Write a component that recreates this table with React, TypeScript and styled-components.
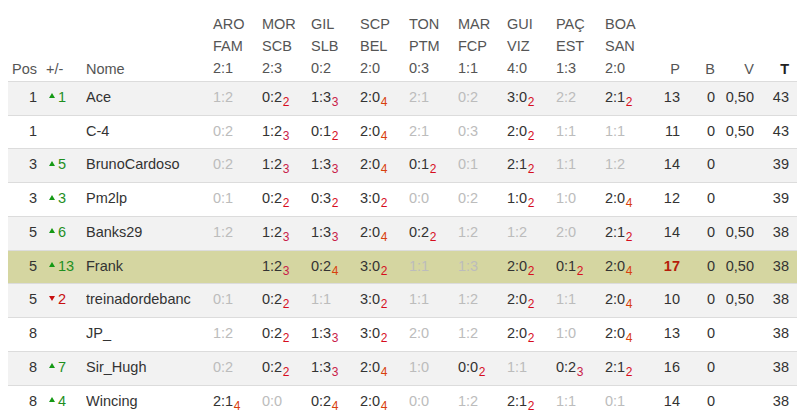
import React from "react";
import styled, { createGlobalStyle } from "styled-components";

const GlobalStyle = createGlobalStyle`
  html, body { margin: 0; padding: 0; background: #fff; }
  body { font-family: "Liberation Sans", Arial, sans-serif; }
  #root { padding: 0 0 0 8px; }
`;

type Align = "left" | "right";

const Table = styled.table`
  border-collapse: collapse;
  table-layout: fixed;
  width: 789px;
  font-size: 14.5px;
  line-height: 1.5;
  color: #333;
`;

const Col = styled.col<{ $w: number }>`
  width: ${(p) => p.$w}px;
`;

const HeadCell = styled.th<{ $align?: Align; $pr?: number; $pb?: number; $bold?: boolean }>`
  font-weight: ${(p) => (p.$bold ? 700 : 400)};
  color: ${(p) => (p.$bold ? "#222" : "#555")};
  text-align: ${(p) => p.$align || "left"};
  vertical-align: bottom;
  padding: 14px ${(p) => p.$pr || 0}px ${(p) => p.$pb || 0}px 0;
  white-space: nowrap;
`;

const Row = styled.tr<{ $bg: "odd" | "even" | "hi" }>`
  background: ${(p) => (p.$bg === "hi" ? "#d5d6a1" : p.$bg === "odd" ? "#f2f2f2" : "#fff")};
`;

const Cell = styled.td<{ $align?: Align; $pr?: number; $pl?: number }>`
  border-top: 1px solid #dcdcdc;
  padding: 5px ${(p) => p.$pr || 0}px 6px ${(p) => p.$pl || 0}px;
  height: 21.75px;
  text-align: ${(p) => p.$align || "left"};
  white-space: nowrap;
  overflow: hidden;
`;

const Delta = styled.span<{ $up: boolean }>`
  color: ${(p) => (p.$up ? "#1f8f1f" : "#c81010")};
`;

const Triangle = styled.span<{ $up: boolean }>`
  display: inline-block;
  width: 0;
  height: 0;
  margin-right: 3px;
  border-left: 3px solid transparent;
  border-right: 3px solid transparent;
  ${(p) =>
    p.$up
      ? "border-bottom: 5px solid #159915; vertical-align: 3.5px;"
      : "border-top: 5px solid #c81010; vertical-align: 3.5px;"}
`;

const Score = styled.span<{ $faded: boolean }>`
  color: ${(p) => (p.$faded ? "#bcbcbc" : "#333")};
`;

const subColors: Record<number, string> = {
  2: "#d60d1e",
  3: "#c81c48",
  4: "#d8400c",
};

const Sub = styled.span<{ $n: number }>`
  font-size: 12px;
  line-height: 0;
  vertical-align: -4px;
  margin-left: 0.5px;
  color: ${(p) => subColors[p.$n] || "#d00"};
`;

const Points = styled.span<{ $hot?: boolean }>`
  font-weight: ${(p) => (p.$hot ? 700 : 400)};
  color: ${(p) => (p.$hot ? "#b51d0a" : "inherit")};
`;

const games = [
  ["ARO", "FAM", "2:1"],
  ["MOR", "SCB", "2:3"],
  ["GIL", "SLB", "0:2"],
  ["SCP", "BEL", "2:0"],
  ["TON", "PTM", "0:3"],
  ["MAR", "FCP", "1:1"],
  ["GUI", "VIZ", "4:0"],
  ["PAÇ", "EST", "1:3"],
  ["BOA", "SAN", "2:0"],
];

type RowData = {
  pos: number;
  delta?: number;
  name: string;
  scores: string[];
  p: number;
  b: number;
  v: string;
  t: number;
  hi?: boolean;
};

// score format: "1:2" faded, "0:2/2" predicted with subscript, "" empty
const rows: RowData[] = [
  { pos: 1, delta: 1, name: "Ace", scores: ["1:2", "0:2/2", "1:3/3", "2:0/4", "2:1", "0:2", "3:0/2", "2:2", "2:1/2"], p: 13, b: 0, v: "0,50", t: 43 },
  { pos: 1, name: "C-4", scores: ["0:2", "1:2/3", "0:1/2", "2:0/4", "2:1", "0:3", "2:0/2", "1:1", "1:1"], p: 11, b: 0, v: "0,50", t: 43 },
  { pos: 3, delta: 5, name: "BrunoCardoso", scores: ["0:2", "1:2/3", "1:3/3", "2:0/4", "0:1/2", "0:1", "2:1/2", "1:1", "1:2"], p: 14, b: 0, v: "", t: 39 },
  { pos: 3, delta: 3, name: "Pm2lp", scores: ["0:1", "0:2/2", "0:3/2", "3:0/2", "0:0", "0:2", "1:0/2", "1:0", "2:0/4"], p: 12, b: 0, v: "", t: 39 },
  { pos: 5, delta: 6, name: "Banks29", scores: ["1:2", "1:2/3", "1:3/3", "2:0/4", "0:2/2", "1:2", "1:2", "2:0", "2:1/2"], p: 14, b: 0, v: "0,50", t: 38 },
  { pos: 5, delta: 13, name: "Frank", scores: ["", "1:2/3", "0:2/4", "3:0/2", "1:1", "1:3", "2:0/2", "0:1/2", "2:0/4"], p: 17, b: 0, v: "0,50", t: 38, hi: true },
  { pos: 5, delta: -2, name: "treinadordebanc", scores: ["0:1", "0:2/2", "1:1", "3:0/2", "1:1", "1:2", "2:0/2", "1:1", "2:0/4"], p: 10, b: 0, v: "0,50", t: 38 },
  { pos: 8, name: "JP_", scores: ["1:2", "0:2/2", "1:3/3", "3:0/2", "2:0", "1:2", "2:0/2", "1:0", "2:0/4"], p: 13, b: 0, v: "", t: 38 },
  { pos: 8, delta: 7, name: "Sir_Hugh", scores: ["0:2", "0:2/2", "1:3/3", "2:0/4", "1:0", "0:0/2", "1:1", "0:2/3", "2:1/2"], p: 16, b: 0, v: "", t: 38 },
  { pos: 8, delta: 4, name: "Wincing", scores: ["2:1/4", "0:0", "0:2/4", "2:0/4", "0:0", "1:2", "2:1/2", "1:1", "0:1"], p: 14, b: 0, v: "", t: 38 },
];

const ScoreCell: React.FC<{ value: string }> = ({ value }) => {
  if (!value) return <Cell />;
  const [main, sub] = value.split("/");
  return (
    <Cell>
      <Score $faded={!sub}>{main}</Score>
      {sub && <Sub $n={Number(sub)}>{sub}</Sub>}
    </Cell>
  );
};

export default function App() {
  return (
    <>
      <GlobalStyle />
      <Table>
        <colgroup>
          <Col $w={38} />
          <Col $w={40} />
          <Col $w={127} />
          {games.map((g) => (
            <Col key={g[0]} $w={49} />
          ))}
          <Col $w={34} />
          <Col $w={35} />
          <Col $w={39} />
          <Col $w={35} />
        </colgroup>
        <thead>
          <tr>
            <HeadCell $align="right" $pr={9}>Pos</HeadCell>
            <HeadCell>+/-</HeadCell>
            <HeadCell>Nome</HeadCell>
            {games.map((g) => (
              <HeadCell key={g[0]} $pb={1.7}>
                {g[0]}
                <br />
                {g[1]}
                <br />
                {g[2]}
              </HeadCell>
            ))}
            <HeadCell $align="right" $pr={8}>P</HeadCell>
            <HeadCell $align="right" $pr={8}>B</HeadCell>
            <HeadCell $align="right" $pr={8}>V</HeadCell>
            <HeadCell $align="right" $pr={8} $bold>T</HeadCell>
          </tr>
        </thead>
        <tbody>
          {rows.map((r, i) => (
            <Row key={r.name} $bg={r.hi ? "hi" : i % 2 === 0 ? "odd" : "even"}>
              <Cell $align="right" $pr={9}>{r.pos}</Cell>
              <Cell $pl={3}>
                {r.delta !== undefined && (
                  <Delta $up={r.delta > 0}>
                    <Triangle $up={r.delta > 0} />
                    {Math.abs(r.delta)}
                  </Delta>
                )}
              </Cell>
              <Cell>{r.name}</Cell>
              {r.scores.map((s, j) => (
                <ScoreCell key={j} value={s} />
              ))}
              <Cell $align="right" $pr={8}>
                <Points $hot={r.hi}>{r.p}</Points>
              </Cell>
              <Cell $align="right" $pr={8}>{r.b}</Cell>
              <Cell $align="right" $pr={8}>{r.v}</Cell>
              <Cell $align="right" $pr={8}>{r.t}</Cell>
            </Row>
          ))}
        </tbody>
      </Table>
    </>
  );
}
